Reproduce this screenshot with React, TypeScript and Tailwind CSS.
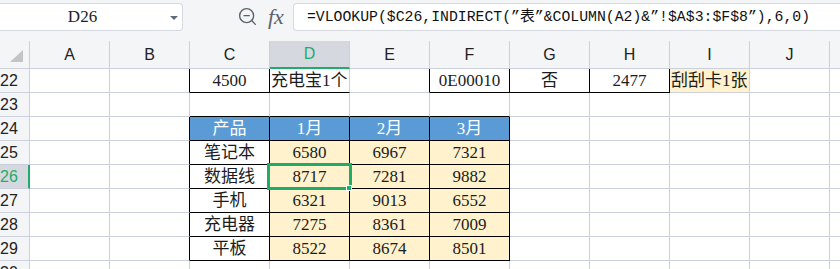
import { ZoomOut } from 'lucide-react';

const COLS = ['A', 'B', 'C', 'D', 'E', 'F', 'G', 'H', 'I', 'J'];
const ROWS = [22, 23, 24, 25, 26, 27, 28, 29, 30];

type CellData = {
  text?: string;
  align?: 'left' | 'center';
  bg?: string;
  color?: string;
  right?: boolean;
  bottom?: boolean;
};

const products = [
  ['笔记本', '6580', '6967', '7321'],
  ['数据线', '8717', '7281', '9882'],
  ['手机', '6321', '9013', '6552'],
  ['充电器', '7275', '8361', '7009'],
  ['平板', '8522', '8674', '8501'],
];

function getCell(row: number, col: string): CellData {
  if (row === 22) {
    switch (col) {
      case 'B':
        return { right: true };
      case 'C':
        return { text: '4500', right: true, bottom: true };
      case 'D':
        return { text: '充电宝1个', align: 'left', bottom: true };
      case 'E':
        return { right: true };
      case 'F':
        return { text: '0E00010', right: true, bottom: true };
      case 'G':
        return { text: '否', right: true, bottom: true };
      case 'H':
        return { text: '2477', right: true, bottom: true };
      case 'I':
        return { text: '刮刮卡1张', align: 'left', bg: 'bg-[#fff2cc]' };
    }
    return {};
  }
  if (row === 23) {
    return ['C', 'D', 'E', 'F'].includes(col) ? { bottom: true } : {};
  }
  if (row >= 24 && row <= 29) {
    if (col === 'B') return { right: true };
    const idx = ['C', 'D', 'E', 'F'].indexOf(col);
    if (idx < 0) return {};
    if (row === 24) {
      const head = ['产品', '1月', '2月', '3月'];
      return { text: head[idx], right: true, bottom: true, bg: 'bg-[#5b9bd5]', color: 'text-white' };
    }
    const data = products[row - 25];
    return {
      text: data[idx],
      right: true,
      bottom: true,
      bg: idx === 0 ? 'bg-white' : 'bg-[#fff2cc]',
    };
  }
  return {};
}

function Cell({ row, col }: { row: number; col: string }) {
  const c = getCell(row, col);
  const selected = row === 26 && col === 'D';
  return (
    <div
      className={`relative h-[24px] border-r border-b flex items-center overflow-visible whitespace-nowrap font-['Liberation_Serif','Noto_Sans_CJK_SC',serif] text-[17px] ${
        c.right ? 'border-r-black' : 'border-r-[#cbd0dc]'
      } ${c.bottom ? 'border-b-black' : 'border-b-[#cbd0dc]'} ${c.bg ?? 'bg-white'} ${c.color ?? 'text-[#1c1c1c]'} ${
        c.align === 'left' ? 'justify-start pl-[1px]' : 'justify-center'
      }`}
    >
      {c.text}
      {selected && (
        <>
          <div className="absolute -left-[3px] -top-[2px] w-[85px] h-[27px] border-[3px] border-[#1fac6b] z-10" />
          <div className="absolute -right-[3px] -bottom-[3px] w-[6px] h-[6px] bg-[#1fac6b] border border-white z-20" />
        </>
      )}
    </div>
  );
}

function Toolbar() {
  return (
    <div className="flex items-start h-[41px] bg-[#f4f5f7]">
      <div className="relative mt-[3px] w-[183px] h-[28px] bg-white border border-l-0 border-[#d6d9df] rounded-r-[4px] flex items-center justify-center pr-[17px]">
        <span className="font-['Liberation_Serif',serif] text-[17px] text-[#222]">D26</span>
        <div className="absolute right-[4px] top-[12px] w-0 h-0 border-l-[4px] border-r-[4px] border-t-[4px] border-l-transparent border-r-transparent border-t-[#5f6b7a]" />
      </div>
      <div className="ml-[54px] mt-[6px] text-[#5a6270]">
        <ZoomOut size={21} strokeWidth={1.6} />
      </div>
      <div className="ml-[10px] mt-[3px] font-['Liberation_Serif',serif] italic text-[22px] leading-[28px] text-[#5a6270]">
        fx
      </div>
      <div className="ml-[9px] mt-[3px] flex-1 h-[28px] bg-white border border-r-0 border-[#d6d9df] rounded-l-[4px] flex items-center pl-[13px] overflow-hidden whitespace-nowrap">
        <span className="font-['Liberation_Mono','Noto_Sans_CJK_SC',monospace] text-[14.8px] text-[#111]">
          =VLOOKUP($C26,INDIRECT(”表”&amp;COLUMN(A2)&amp;”!$A$3:$F$8”),6,0)
        </span>
      </div>
    </div>
  );
}

function Sheet() {
  return (
    <div className="grid grid-cols-[30px_repeat(10,80px)_1fr] bg-[#f4f5f7]">
      <div className="h-[28px] border-r border-b border-[#cbd0dc] flex items-end justify-end pr-[6px] pb-[6px]">
        <svg width="13" height="12" viewBox="0 0 13 12">
          <polygon points="13,0 13,12 0,12" fill="#c2c4c8" />
        </svg>
      </div>
      {COLS.map((c) => (
        <div
          key={c}
          className={`h-[28px] border-r border-[#cbd0dc] flex items-center justify-center font-['Liberation_Sans',sans-serif] text-[16px] ${
            c === 'D'
              ? 'bg-[#d5d8de] text-[#1fac6b] border-b-2 border-b-[#1fac6b]'
              : 'text-[#222] border-b border-b-[#cbd0dc]'
          }`}
        >
          {c}
        </div>
      ))}
      <div className="h-[28px] border-b border-[#cbd0dc]" />

      {ROWS.map((r) => (
        <div key={r} className="contents">
          <div
            className={`h-[24px] border-b border-b-[#cbd0dc] flex items-center font-['Liberation_Sans',sans-serif] text-[16px] ${
              r === 26
                ? 'bg-[#d5d8de] text-[#1fac6b] border-r-2 border-r-[#1fac6b]'
                : 'text-[#222] border-r border-r-[#cbd0dc]'
            }`}
          >
            {r}
          </div>
          {COLS.map((c) => (
            <Cell key={c} row={r} col={c} />
          ))}
          <div className="h-[24px] border-b border-[#cbd0dc] bg-white" />
        </div>
      ))}
    </div>
  );
}

export default function App() {
  return (
    <div className="w-[840px] h-[269px] overflow-hidden bg-white">
      <Toolbar />
      <Sheet />
    </div>
  );
}
